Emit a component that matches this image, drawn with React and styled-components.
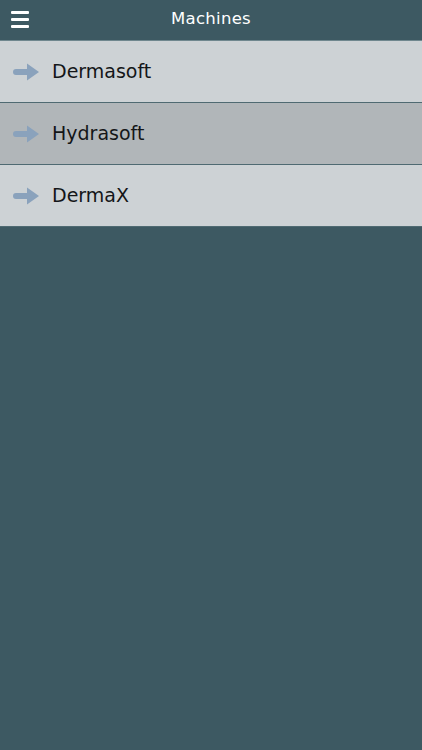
import React from 'react';
import styled, { createGlobalStyle } from 'styled-components';

const machines = ["Dermasoft", "Hydrasoft", "DermaX"]

const GlobalStyle = createGlobalStyle`
  html, body {
    margin: 0;
    padding: 0;
    background-color: #3d5962;
  }
`

const Page = styled.div`
  width: 422px;
  height: 750px;
  background-color: #3d5962;
  font-family: 'DejaVu Sans', 'Open Sans', sans-serif;
`

const Header = styled.div`
  height: 40px;
  display: flex;
  align-items: center;
  justify-content: center;
  position: relative;
  border-bottom: 1px solid #6f878e;
`

const Title = styled.div`
  color: #ffffff;
  font-size: 16.5px;
  letter-spacing: 0.3px;
  margin-top: -4px;
`

const Menu = styled.div`
  position: absolute;
  left: 11px;
  top: 11px;
  width: 18px;
  height: 17px;
  display: flex;
  flex-direction: column;
  justify-content: space-between;
`

const Bar = styled.div`
  height: 3px;
  background-color: #ffffff;
  border-radius: 1px;
`

const List = styled.div`
  display: flex;
  flex-direction: column;
`

const Row = styled.div`
  height: 61px;
  display: flex;
  align-items: center;
  padding-left: 13px;
  column-gap: 13px;
  background-color: ${({ active }) => (active ? '#b1b6b9' : '#cdd2d5')};
  border-bottom: 1px solid #4f6a72;
`

const Label = styled.div`
  font-size: 19px;
  color: #141618;
  margin-top: -1px;
`

const Arrow = () => (
  <svg width="26" height="18" viewBox="0 0 26 18">
    <path d="M3 6 H14 V0.5 L26 9 L14 17.5 V12 H3 Q0 12 0 9 Q0 6 3 6 Z" fill="#8aa2bc" />
  </svg>
)

const App = () => {
  return (
    <Page>
      <GlobalStyle />
      <Header>
        <Menu>
          <Bar />
          <Bar />
          <Bar />
        </Menu>
        <Title>Machines</Title>
      </Header>
      <List>
        {machines.map((name, i) => (
          <Row key={name} active={i === 1}>
            <Arrow />
            <Label>{name}</Label>
          </Row>
        ))}
      </List>
    </Page>
  );
};

export default App;
